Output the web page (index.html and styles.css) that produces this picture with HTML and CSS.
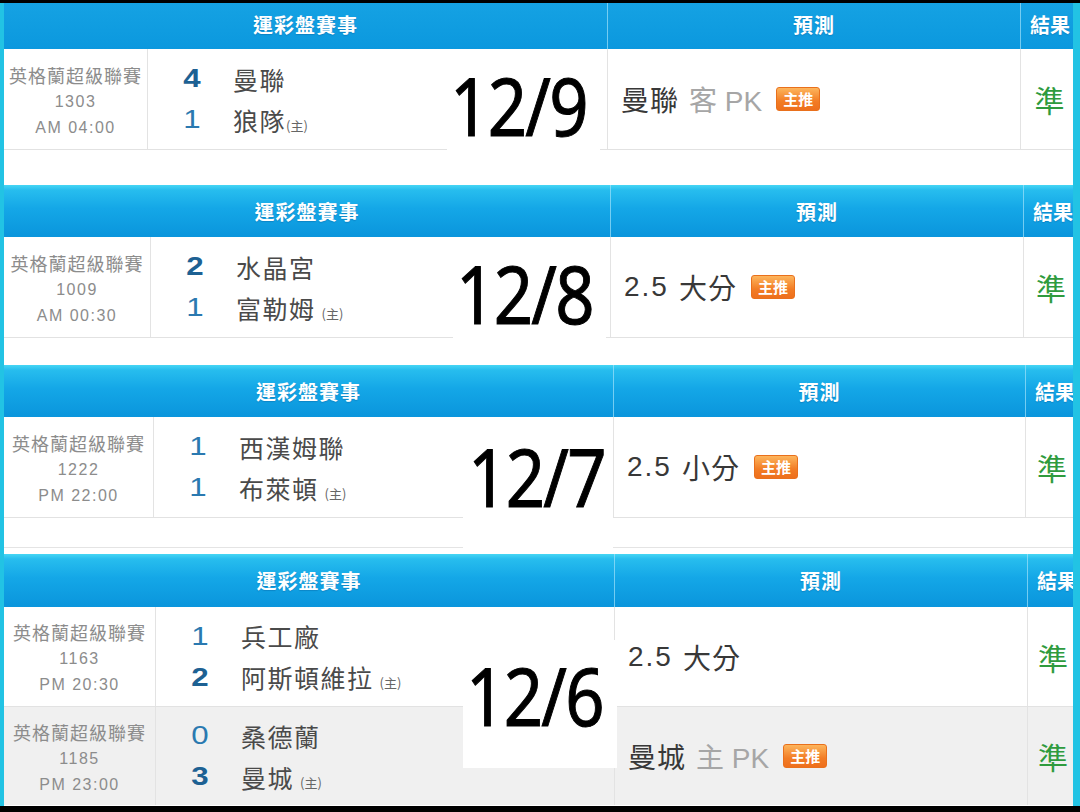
FILE: index.html
```html
<!DOCTYPE html>
<html lang="zh-Hant">
<head>
<meta charset="utf-8">
<title>運彩盤賽事</title>
<link rel="stylesheet" href="styles.css">
</head>
<body>
<div class="screen">
  <div class="sheet">
    <section class="sec s1">
      <div class="head">
        <div class="h-match">運彩盤賽事</div>
        <div class="h-pred">預測</div>
        <div class="h-res">結果</div>
      </div>
      <div class="row">
        <div class="c-league"><span class="lg">英格蘭超級聯賽</span><span class="no">1303</span><span class="tm">AM 04:00</span></div>
        <div class="c-match">
          <div class="line"><span class="sc win">4</span><span class="tn">曼聯</span></div>
          <div class="line"><span class="sc">1</span><span class="tn">狼隊<small class="home tight">(主)</small></span></div>
        </div>
        <div class="c-pred"><span class="pk">曼聯</span><span class="mut">客 PK</span><span class="badge">主推</span></div>
        <div class="c-res">準</div>
      </div>
    </section>
    <div class="gap g1"></div>
    <section class="sec s2">
      <div class="head">
        <div class="h-match">運彩盤賽事</div>
        <div class="h-pred">預測</div>
        <div class="h-res">結果</div>
      </div>
      <div class="row">
        <div class="c-league"><span class="lg">英格蘭超級聯賽</span><span class="no">1009</span><span class="tm">AM 00:30</span></div>
        <div class="c-match">
          <div class="line"><span class="sc win">2</span><span class="tn">水晶宮</span></div>
          <div class="line"><span class="sc">1</span><span class="tn">富勒姆<small class="home">(主)</small></span></div>
        </div>
        <div class="c-pred"><span class="num">2.5</span><span class="pk sp">大分</span><span class="badge">主推</span></div>
        <div class="c-res">準</div>
      </div>
    </section>
    <div class="gap g2"></div>
    <section class="sec s3">
      <div class="head">
        <div class="h-match">運彩盤賽事</div>
        <div class="h-pred">預測</div>
        <div class="h-res">結果</div>
      </div>
      <div class="row">
        <div class="c-league"><span class="lg">英格蘭超級聯賽</span><span class="no">1222</span><span class="tm">PM 22:00</span></div>
        <div class="c-match">
          <div class="line"><span class="sc">1</span><span class="tn">西漢姆聯</span></div>
          <div class="line"><span class="sc">1</span><span class="tn">布萊頓<small class="home">(主)</small></span></div>
        </div>
        <div class="c-pred"><span class="num">2.5</span><span class="pk sp">小分</span><span class="badge">主推</span></div>
        <div class="c-res">準</div>
      </div>
    </section>
    <div class="gap g3"></div>
    <section class="sec s4">
      <div class="head">
        <div class="h-match">運彩盤賽事</div>
        <div class="h-pred">預測</div>
        <div class="h-res">結果</div>
      </div>
      <div class="row">
        <div class="c-league"><span class="lg">英格蘭超級聯賽</span><span class="no">1163</span><span class="tm">PM 20:30</span></div>
        <div class="c-match">
          <div class="line"><span class="sc">1</span><span class="tn">兵工廠</span></div>
          <div class="line"><span class="sc win">2</span><span class="tn">阿斯頓維拉<small class="home">(主)</small></span></div>
        </div>
        <div class="c-pred"><span class="num">2.5</span><span class="pk sp">大分</span></div>
        <div class="c-res">準</div>
      </div>
      <div class="row alt">
        <div class="c-league"><span class="lg">英格蘭超級聯賽</span><span class="no">1185</span><span class="tm">PM 23:00</span></div>
        <div class="c-match">
          <div class="line"><span class="sc">0</span><span class="tn">桑德蘭</span></div>
          <div class="line"><span class="sc win">3</span><span class="tn">曼城<small class="home">(主)</small></span></div>
        </div>
        <div class="c-pred"><span class="pk">曼城</span><span class="mut">主 PK</span><span class="badge">主推</span></div>
        <div class="c-res">準</div>
      </div>
    </section>
  </div>
  <div class="date d1"><span class="dt">12/9</span></div>
  <div class="date d2"><span class="dt">12/8</span></div>
  <div class="date d3"><span class="dt">12/7</span></div>
  <div class="date d4"><span class="dt">12/6</span></div>
</div>
</body>
</html>
```

FILE: styles.css
```css
* { box-sizing: border-box; margin: 0; padding: 0; }
html, body { background: #000; }
body {
  width: 1080px;
  height: 812px;
  overflow: hidden;
  font-family: "Liberation Sans", "Noto Sans CJK TC", sans-serif;
}

.screen {
  position: relative;
  width: 1080px;
  height: 812px;
  padding: 3px 0 6px;
  background: #000;
}
.sheet {
  height: 803px;
  background: #fff;
  border-left: 4px solid #22c3e4;
  border-right: 7px solid #22c3e4;
  display: flex;
  flex-direction: column;
  overflow: hidden;
}

/* sections: each screenshot has slightly shifted column edges */
.sec { display: flex; flex-direction: column; }
.s1 { --c1: 143px; --c2: 460px; --c3: 413px; }
.s2 { --c1: 146px; --c2: 460px; --c3: 413px; }
.s3 { --c1: 149px; --c2: 460px; --c3: 412px; }
.s4 { --c1: 151px; --c2: 459px; --c3: 413px; }

.head {
  display: grid;
  grid-template-columns: calc(var(--c1) + var(--c2)) var(--c3) 1fr;
  height: 52px;
  background: linear-gradient(to bottom, #46d6f4 0, #27bdee 5px, #14a7e7 45%, #0a95dc 100%);
  color: #fff;
  font-weight: 700;
  font-size: 20px;
  text-shadow: 0 1px 1px rgba(0, 60, 120, 0.25);
}
.s1 .head {
  height: 46px;
  background: linear-gradient(to bottom, #15a2e3, #0b98de);
}
.s4 .head { height: 53px; }
.head > div {
  display: flex;
  align-items: center;
  justify-content: center;
  font-family: "Noto Sans CJK TC", sans-serif;
  white-space: nowrap;
}
.h-match, .h-pred { letter-spacing: 1px; }
.s1 .head > div { padding-bottom: 4px; }
.h-pred, .h-res { border-left: 1px solid rgba(160, 225, 250, 0.7); }
.head > .h-res { justify-content: flex-start; padding-left: 9px; }

.row {
  display: grid;
  grid-template-columns: var(--c1) var(--c2) var(--c3) 1fr;
  height: 101px;
  background: #fff;
  border-bottom: 1px solid #e2e2e2;
}
.s4 .row { height: 100px; }
.s4 .row.alt { height: 98px; border-bottom: 0; background: #f0f0f0; }

.c-league {
  display: flex;
  flex-direction: column;
  align-items: center;
  justify-content: center;
  padding-top: 4px;
  color: #8c8c8c;
}
.lg {
  font-family: "Noto Sans CJK TC", sans-serif;
  font-size: 18px;
  line-height: 27px;
  letter-spacing: 1px;
}
.no, .tm {
  font-size: 16px;
  line-height: 26px;
  letter-spacing: 1.5px;
}

.c-match {
  border-left: 1px solid #e3e3e3;
  display: flex;
  flex-direction: column;
  justify-content: center;
  padding-left: 30px;
}
.line { display: flex; align-items: center; height: 41px; }
.sc {
  display: inline-block;
  width: 28px;
  text-align: center;
  font-size: 25px;
  color: #2a79b0;
  transform: scaleX(1.25);
}
.sc.win { font-weight: 700; color: #1d6193; }
.tn {
  margin-left: 27px;
  font-family: "Noto Sans CJK TC", sans-serif;
  font-size: 25px;
  color: #4a4a4a;
  letter-spacing: 1.5px;
}
.home {
  font-size: 13px;
  color: #666;
  letter-spacing: 0;
  margin-left: 6px;
}
.home.tight { margin-left: 0; }

.c-pred {
  border-left: 1px solid #e3e3e3;
  display: flex;
  align-items: center;
  padding-left: 13px;
  font-size: 28px;
  color: #383838;
}
.pk { font-family: "Noto Sans CJK TC", sans-serif; letter-spacing: 1px; }
.pk.sp { margin-left: 10px; }
.num { letter-spacing: 2px; }
.mut { color: #a6a6a6; margin-left: 10px; }
.badge {
  margin-left: 14px;
  width: 44px;
  height: 24px;
  border-radius: 3px;
  border: 1px solid #e9701c;
  background: linear-gradient(to bottom, #fdb55c, #f27c25 60%, #ee6f1c);
  color: #fff;
  font-family: "Noto Sans CJK TC", sans-serif;
  font-size: 15px;
  font-weight: 700;
  line-height: 22px;
  text-align: center;
}

.c-res {
  border-left: 1px solid #e3e3e3;
  display: flex;
  align-items: center;
  justify-content: center;
  padding-left: 5px;
  font-family: "Noto Sans CJK TC", sans-serif;
  font-size: 30px;
  color: #2f9b3e;
}

.gap { background: #fff; }
.g1 { height: 35px; }
.g2 { height: 27px; }
.g3 { height: 30px; border-bottom: 1px solid #e4e4e4; margin-bottom: 6px; }

/* big date stickers laid over the screenshots */
.date {
  position: absolute;
  background: #fff;
  font-family: "Noto Sans", sans-serif;
  font-size: 80px;
  line-height: 80px;
  color: #000;
  white-space: nowrap;
}
.dt {
  display: inline-block;
  letter-spacing: -2px;
  -webkit-text-stroke: 1px #000;
  transform: scaleX(0.86);
  transform-origin: left center;
}
.d1 { left: 447px; top: 50px; width: 153px; height: 100px; padding: 15px 0 0 3px; }
.d2 { left: 453px; top: 237px; width: 153px; height: 108px; padding: 16px 0 0 3px; }
.d3 { left: 463px; top: 417px; width: 150px; height: 135px; padding: 19px 0 0 5px; }
.d4 { left: 463px; top: 640px; width: 154px; height: 128px; padding: 15px 0 0 3px; }
```
